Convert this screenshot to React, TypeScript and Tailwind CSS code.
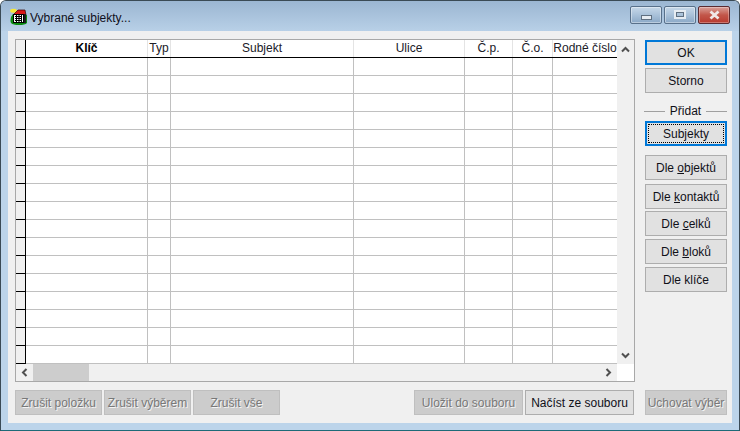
import React from "react";

const font = { fontFamily: '"Liberation Sans", Arial, sans-serif' };

const columns = [
  { w: "w-[122px]", label: "Klíč", cls: "font-bold text-black" },
  { w: "w-[23px]", label: "Typ", cls: "" },
  { w: "w-[183px]", label: "Subjekt", cls: "" },
  { w: "w-[111px]", label: "Ulice", cls: "" },
  { w: "w-[48px]", label: "Č.p.", cls: "" },
  { w: "w-[40px]", label: "Č.o.", cls: "" },
  { w: "w-[64px]", label: "Rodné číslo", cls: "" },
];

function Btn({
  children,
  variant = "normal",
  w = "w-[82px]",
  mt = "",
}: {
  children: React.ReactNode;
  variant?: "normal" | "default" | "focus" | "disabled";
  w?: string;
  mt?: string;
}) {
  const base = `${w} ${mt} h-[25px] shrink-0 flex items-center justify-center text-[12px] whitespace-nowrap`;
  if (variant === "default")
    return <div className={`${base} border-2 border-[#0078d7] bg-[#e1e1e1] text-[#101018]`}>{children}</div>;
  if (variant === "focus")
    return (
      <div className={`${base} border-2 border-[#0078d7] bg-[#e1e1e1] text-[#101018] p-px`}>
        <div className="w-full h-full flex items-center justify-center border border-dotted border-black">{children}</div>
      </div>
    );
  if (variant === "disabled")
    return (
      <div className={`${base} border border-[#bfbfbf] bg-[#cccccc] text-[#787878]`}>
        <span className="[text-shadow:1px_1px_0_#f4f4f4]">{children}</span>
      </div>
    );
  return <div className={`${base} border border-[#adadad] bg-[#e1e1e1] text-[#101018]`}>{children}</div>;
}

function Chevron({ dir }: { dir: "up" | "down" | "left" | "right" }) {
  const rot = { up: 0, down: 180, left: 270, right: 90 }[dir];
  return (
    <svg width="9" height="7" viewBox="0 0 9 7" style={{ transform: `rotate(${rot}deg)` }}>
      <path d="M1 5.5 L4.5 2 L8 5.5" fill="none" stroke="#505050" strokeWidth="2" />
    </svg>
  );
}

function House() {
  return (
    <svg width="18" height="18" viewBox="0 0 18 18">
      <path d="M1 9 Q0 13 1 15 Q3 17 9 17 Q15 17 17 15 L17 7 L3 6 Z" fill="#0a8a10" />
      <ellipse cx="3.5" cy="2.8" rx="3.4" ry="2" fill="#f6e83a" />
      <path d="M3 7 L8 2 L15 2 L16 7 Z" fill="#d81818" stroke="#300" strokeWidth="0.7" />
      <rect x="3.5" y="6.5" width="10" height="8" fill="#fff" stroke="#000" />
      <path d="M5 8.5h7M5 10.5h7M5 12.5h7M6.5 7v7M9 7v7M11.5 7v7" stroke="#000" strokeWidth="1" />
      <rect x="14" y="6" width="2" height="9" fill="#1a1a1a" />
    </svg>
  );
}

function WinBtn({ w, kind }: { w: string; kind: "min" | "max" | "close" }) {
  if (kind === "close")
    return (
      <div className={`${w} h-[18px] rounded-[2px] border border-[#5a2a30] bg-gradient-to-b from-[#d8a09a] via-[#c2564a] to-[#b8392e] flex items-center justify-center shadow-[inset_0_0_0_1px_rgba(255,255,255,0.3)]`}>
        <svg width="13" height="10" viewBox="0 0 13 10">
          <path d="M2.5 1.5 L10.5 8.5 M10.5 1.5 L2.5 8.5" stroke="#f0e8e8" strokeWidth="2.8" />
        </svg>
      </div>
    );
  return (
    <div className={`${w} h-[18px] rounded-[2px] border border-[#58708a] bg-gradient-to-b from-[#c6d8e9] via-[#a9c1d9] to-[#8aa8c6] flex ${kind === "min" ? "items-end pb-[3px]" : "items-center"} justify-center shadow-[inset_0_0_0_1px_rgba(255,255,255,0.4)]`}>
      {kind === "min" ? (
        <div className="w-[11px] h-[5px] bg-[#e6ecf2] border border-[#5f6f80]" />
      ) : (
        <div className="w-[12px] h-[9px] border-2 border-[#e6ecf2] outline outline-1 outline-[#5f6f80] -outline-offset-[3px]" />
      )}
    </div>
  );
}

function Row() {
  return (
    <div className="flex h-[18px]">
      <div className="w-[9px] shrink-0 bg-[#f0f0f0] border-b border-black" />
      <div className="w-px shrink-0 bg-black" />
      {columns.map((c, i) => (
        <div
          key={i}
          className={`${c.w} h-full shrink-0 border-b border-[#c0c0c0] ${i < columns.length - 1 ? "border-r" : ""} border-r-[#c0c0c0]`}
        />
      ))}
    </div>
  );
}

export default function App() {
  return (
    <div
      className="w-[740px] h-[431px] overflow-hidden flex flex-col bg-[#bcd4ea] border border-[#3a4a55] rounded-t-[6px] border-b-[#1e6a78]"
      style={font}
    >
      <div className="h-[30px] shrink-0 flex items-center pl-[9px] pr-[9px] pt-[2px] bg-gradient-to-b from-[#9bb6d2] to-[#b8d0e7]">
        <div className="w-[18px] h-[18px] mr-[2px] -mt-[1px]">
          <House />
        </div>
        <span className="text-[12px] text-[#101020] mt-[2px]">Vybrané subjekty...</span>
        <div className="ml-auto flex gap-[2px] -mt-[5px]">
          <WinBtn w="w-[32px]" kind="min" />
          <WinBtn w="w-[32px]" kind="max" />
          <WinBtn w="w-[32px]" kind="close" />
        </div>
      </div>

      <div className="mx-[7px] h-[392px] bg-[#f0f0f0] pl-[7px] pr-[5px] pt-[8px] flex flex-col">
        <div className="flex h-[343px]">
          <div className="w-[620px] shrink-0 h-full border border-[#a8a8a8] bg-white flex flex-col overflow-hidden">
            <div className="flex flex-1 min-h-0">
              <div className="w-[601px] shrink-0 overflow-hidden flex flex-col">
                <div className="flex h-[18px] shrink-0 border-b border-black w-[612px]">
                  <div className="w-[9px] shrink-0 bg-[#f0f0f0]" />
                  <div className="w-px shrink-0 bg-black" />
                  {columns.map((c, i) => (
                    <div
                      key={i}
                      className={`${c.w} shrink-0 text-[12px] leading-[17px] text-center whitespace-nowrap text-[#202028] ${i < columns.length - 1 ? "border-r border-[#e4e4e4]" : ""} ${c.cls}`}
                    >
                      {c.label}
                    </div>
                  ))}
                </div>
                <div className="w-[612px]">
                  {Array.from({ length: 17 }).map((_, i) => (
                    <Row key={i} />
                  ))}
                </div>
              </div>
              <div className="w-[17px] shrink-0 bg-[#f0f0f0] flex flex-col items-center justify-between pt-[6px] pb-[5px]">
                <Chevron dir="up" />
                <Chevron dir="down" />
              </div>
            </div>
            <div className="flex h-[17px] shrink-0">
              <div className="w-[601px] bg-[#f0f0f0] flex items-center">
                <div className="w-[17px] flex justify-center">
                  <Chevron dir="left" />
                </div>
                <div className="w-[56px] h-full bg-[#cdcdcd]" />
                <div className="ml-auto w-[17px] flex justify-center">
                  <Chevron dir="right" />
                </div>
              </div>
              <div className="w-[17px] bg-white" />
            </div>
          </div>

          <div className="ml-[10px] w-[82px] pt-px flex flex-col">
            <Btn variant="default">OK</Btn>
            <Btn mt="mt-[3px]">Storno</Btn>
            <div className="mt-[11px] h-[14px] -ml-px flex items-center text-[12px] text-[#101018]">
              <div className="h-px flex-1 bg-[#a0a0a0]" />
              <span className="px-[5px]">Přidat</span>
              <div className="h-px flex-1 bg-[#a0a0a0]" />
            </div>
            <Btn variant="focus" mt="mt-[3px]">
              <span>
                Sub<u>j</u>ekty
              </span>
            </Btn>
            <Btn mt="mt-[9px]">
              <span>
                Dle <u>o</u>bjektů
              </span>
            </Btn>
            <Btn mt="mt-[4px]">
              <span>
                Dle <u>k</u>ontaktů
              </span>
            </Btn>
            <Btn mt="mt-[2px]">
              <span>
                Dle <u>c</u>elků
              </span>
            </Btn>
            <Btn mt="mt-[3px]">
              <span>
                Dle <u>b</u>loků
              </span>
            </Btn>
            <Btn mt="mt-[3px]">Dle klíče</Btn>
          </div>
        </div>

        <div className="flex mt-[8px]">
          <Btn variant="disabled" w="w-[87px]">Zrušit položku</Btn>
          <Btn variant="disabled" w="w-[87px]" mt="ml-[2px]">Zrušit výběrem</Btn>
          <Btn variant="disabled" w="w-[87px]" mt="ml-[2px]">Zrušit vše</Btn>
          <Btn variant="disabled" w="w-[109px]" mt="ml-[134px]">Uložit do souboru</Btn>
          <Btn w="w-[109px]" mt="ml-[2px]">Načíst ze souboru</Btn>
          <Btn variant="disabled" w="w-[82px]" mt="ml-[11px]">Uchovat výběr</Btn>
        </div>
      </div>
    </div>
  );
}
